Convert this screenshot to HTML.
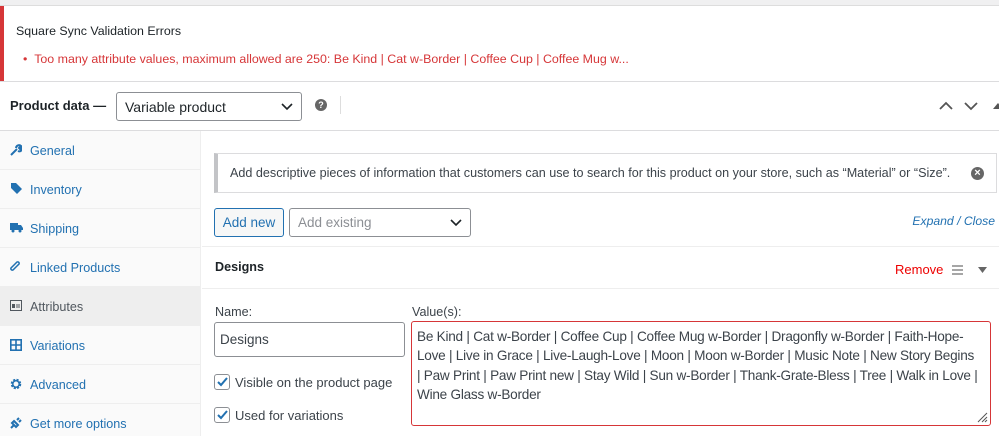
<!DOCTYPE html><html><head><style>
*{margin:0;padding:0;box-sizing:border-box}
body{width:999px;height:436px;overflow:hidden;background:#fff;font-family:"Liberation Sans",sans-serif;color:#3c434a;position:relative;font-size:13px}
.a{position:absolute;white-space:nowrap}
.nav{position:absolute;left:0;width:201px;height:39px;border-bottom:1px solid #eee;color:#2271b1;font-size:12.6px;padding-left:30px;line-height:40px}
.nav svg{position:absolute;left:10px;top:13px}
</style></head><body>
<div class="a" style="left:0;top:0;width:999px;height:6px;background:#f0f0f1;border-bottom:1px solid #ddd"></div>
<div class="a" style="left:0;top:6px;width:4px;height:75px;background:#d63638"></div>
<div class="a" style="left:16px;top:24px;font-size:12.4px;color:#1d2327">Square Sync Validation Errors</div>
<div class="a" style="left:23px;top:52px;font-size:12.4px;color:#d63638">• &nbsp;Too many attribute values, maximum allowed are 250: Be Kind | Cat w-Border | Coffee Cup | Coffee Mug w...</div>
<div class="a" style="left:0;top:81px;width:999px;height:1px;background:#dcdcde"></div>
<div class="a" style="left:10px;top:98px;font-size:13px;font-weight:bold;color:#1d2327">Product data —</div>
<div class="a" style="left:116px;top:92px;width:186px;height:29px;border:1px solid #8c8f94;border-radius:3px;font-size:14px;color:#1d2327;padding:6px 8px">Variable product
<svg style="position:absolute;right:8px;top:10px" width="12" height="8" viewBox="0 0 12 8"><path d="M1 1l5 5 5-5" stroke="#1d2327" stroke-width="1.6" fill="none"/></svg></div>
<div class="a" style="left:315px;top:99px;width:12px;height:12px;border-radius:50%;background:#666;color:#fff;font-size:9px;font-weight:bold;text-align:center;line-height:12px">?</div>
<div class="a" style="left:340px;top:96px;width:1px;height:18px;background:#ddd"></div>
<svg class="a" style="left:939px;top:100px" width="60" height="12" viewBox="0 0 60 12"><path d="M1 9l6-6 6 6M26 3l6 6 6-6" stroke="#555" stroke-width="1.8" fill="none"/><path d="M54 9l5-6 5 6z" fill="#555"/></svg>
<div class="a" style="left:0;top:130px;width:999px;height:1px;background:#dcdcde"></div>
<div class="a" style="left:0;top:131px;width:201px;height:305px;background:#fafafa;border-right:1px solid #eee"></div>
<div class="nav" style="top:131px"><svg width="12" height="12" viewBox="0 0 12 12"><path d="M1 11l6-6M6 4a3 3 0 0 1 5-2l-2 2 1 1 2-2a3 3 0 0 1-4 4" stroke="#2271b1" stroke-width="2" fill="none"/></svg>General</div>
<div class="nav" style="top:170px"><svg width="12" height="12" viewBox="0 0 12 12"><path d="M6 0l6 6-5 5-6-6 0-5z" fill="#2271b1"/></svg>Inventory</div>
<div class="nav" style="top:209px"><svg width="13" height="11" viewBox="0 0 13 11"><rect x="0" y="1" width="8" height="7" fill="#2271b1"/><path d="M8 3h3l2 3v2H8z" fill="#2271b1"/><circle cx="3" cy="9" r="1.5" fill="#2271b1"/><circle cx="10" cy="9" r="1.5" fill="#2271b1"/></svg>Shipping</div>
<div class="nav" style="top:248px"><svg width="12" height="12" viewBox="0 0 12 12"><path d="M5 7L3 9a1.5 1.5 0 0 1-2-2l3-3M7 5l2-2a1.5 1.5 0 0 0-2-2L4 4M4 8l4-4" stroke="#2271b1" stroke-width="1.5" fill="none"/></svg>Linked Products</div>
<div class="nav" style="top:287px;background:#eee;color:#50575e"><svg width="12" height="11" viewBox="0 0 12 11"><rect x="0.5" y="0.5" width="11" height="10" fill="none" stroke="#50575e"/><rect x="2" y="4" width="3" height="4" fill="#50575e"/><path d="M6 5h4M6 7h4" stroke="#50575e"/></svg>Attributes</div>
<div class="nav" style="top:326px"><svg width="12" height="12" viewBox="0 0 12 12"><rect x="0.8" y="0.8" width="10.4" height="10.4" fill="none" stroke="#2271b1" stroke-width="1.6"/><path d="M6 0v12M0 6h12" stroke="#2271b1" stroke-width="1.6"/></svg>Variations</div>
<div class="nav" style="top:365px"><svg width="12" height="12" viewBox="0 0 12 12"><circle cx="6" cy="6" r="4" fill="none" stroke="#2271b1" stroke-width="2.5" stroke-dasharray="2 1.2"/><circle cx="6" cy="6" r="3.2" fill="none" stroke="#2271b1" stroke-width="1.5"/></svg>Advanced</div>
<div class="nav" style="top:404px;border:none"><svg width="12" height="12" viewBox="0 0 12 12"><path d="M1 11l3-3M4 4l4 4-2 2-4-4zM7 3l2-2M9 5l2-2" stroke="#2271b1" stroke-width="2" fill="none"/></svg>Get more options</div>
<div class="a" style="left:214px;top:153px;width:783px;height:40px;border:1px solid #dcdcde;border-left:4px solid #c3c4c7;padding:12px 12px;font-size:12.6px;color:#3c434a">Add descriptive pieces of information that customers can use to search for this product on your store, such as “Material” or “Size”.</div>
<div class="a" style="left:971px;top:167px;width:13px;height:13px;border-radius:50%;background:#666;color:#fff;font-size:11px;font-weight:bold;text-align:center;line-height:13px">×</div>
<div class="a" style="left:214px;top:208px;width:70px;height:29px;border:1px solid #2271b1;border-radius:3px;background:#f6f7f7;color:#2271b1;font-size:13.5px;text-align:center;line-height:27px">Add new</div>
<div class="a" style="left:289px;top:208px;width:182px;height:29px;border:1px solid #8c8f94;border-radius:3px;color:#8c8f94;font-size:13.5px;padding:6px 8px">Add existing<svg style="position:absolute;right:8px;top:10px" width="12" height="8" viewBox="0 0 12 8"><path d="M1 1l5 5 5-5" stroke="#1d2327" stroke-width="1.6" fill="none"/></svg></div>
<div class="a" style="right:4px;top:214px;font-style:italic;color:#2271b1;font-size:12.2px">Expand / Close</div>
<div class="a" style="left:202px;top:246px;width:797px;height:1px;background:#eee"></div>
<div class="a" style="left:215px;top:260px;font-weight:bold;color:#1d2327;font-size:12.6px">Designs</div>
<div class="a" style="left:895px;top:262px;color:#e00;font-size:13px">Remove</div>
<svg class="a" style="left:952px;top:265px" width="36" height="10" viewBox="0 0 36 10"><path d="M0 1h11M0 5h11M0 9h11" stroke="#888" stroke-width="1.4"/><path d="M26 2h9l-4.5 6z" fill="#666"/></svg>
<div class="a" style="left:202px;top:288px;width:797px;height:1px;background:#eee"></div>
<div class="a" style="left:215px;top:305px;font-size:12.6px">Name:</div>
<div class="a" style="left:214px;top:322px;width:191px;height:35px;border:1px solid #8c8f94;border-radius:3px;font-size:13.5px;padding:9px 5px">Designs</div>
<div class="a" style="left:412px;top:305px;font-size:12.6px">Value(s):</div>
<div class="a" style="left:411px;top:321px;width:580px;height:105px;border:1px solid #d63638;border-radius:3px;font-size:13.6px;line-height:19.3px;padding:5px 5px;color:#3c434a;letter-spacing:-0.25px">Be Kind | Cat w-Border | Coffee Cup | Coffee Mug w-Border | Dragonfly w-Border | Faith-Hope-<br>Love | Live in Grace | Live-Laugh-Love | Moon | Moon w-Border | Music Note | New Story Begins<br>| Paw Print | Paw Print new | Stay Wild | Sun w-Border | Thank-Grate-Bless | Tree | Walk in Love |<br>Wine Glass w-Border
<svg style="position:absolute;right:2px;bottom:2px" width="12" height="12" viewBox="0 0 12 12"><path d="M11 2L2 11M11 6l-5 5M11 9l-2 2" stroke="#555"/></svg></div>
<div class="a" style="left:214px;top:374px;width:16px;height:16px;border:1px solid #8c8f94;border-radius:3px"><svg width="14" height="14" viewBox="0 0 14 14"><path d="M3 7l3 3 6-7" stroke="#2271b1" stroke-width="2" fill="none"/></svg></div>
<div class="a" style="left:235px;top:375px;font-size:13px">Visible on the product page</div>
<div class="a" style="left:214px;top:407px;width:16px;height:16px;border:1px solid #8c8f94;border-radius:3px"><svg width="14" height="14" viewBox="0 0 14 14"><path d="M3 7l3 3 6-7" stroke="#2271b1" stroke-width="2" fill="none"/></svg></div>
<div class="a" style="left:235px;top:408px;font-size:13px">Used for variations</div>
</body></html>
